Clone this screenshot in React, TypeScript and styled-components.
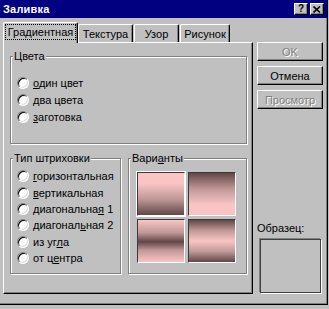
import React from "react";
import styled, { createGlobalStyle } from "styled-components";

const GlobalStyle = createGlobalStyle`
  html, body {
    margin: 0;
    padding: 0;
    background: #c0c0c0;
  }
  body {
    font-family: "Liberation Sans", Arial, sans-serif;
    font-size: 11px;
    color: #000;
  }
`;

const colorOptions = [
  ["", "о", "дин цвет"],
  ["", "д", "ва цвета"],
  ["", "з", "аготовка"],
];

const hatchOptions = [
  ["", "г", "оризонтальная"],
  ["", "в", "ертикальная"],
  ["диагональна", "я", " 1"],
  ["диагонал", "ь", "ная 2"],
  ["из уг", "л", "а"],
  ["от ц", "е", "нтра"],
];

const light = "#fac4c4";
const mid = "#c09898";
const dark = "#624646";

const variants = [
  `linear-gradient(to bottom, ${light} 0%, ${light} 25%, ${mid} 62%, ${dark} 100%)`,
  `linear-gradient(to bottom, ${dark} 0%, ${mid} 38%, ${light} 75%, ${light} 100%)`,
  `linear-gradient(to bottom, ${light} 0%, ${mid} 30%, ${dark} 52%, ${mid} 72%, ${light} 100%)`,
  `linear-gradient(to bottom, ${dark} 0%, ${mid} 25%, ${light} 50%, ${mid} 75%, ${dark} 100%)`,
];

const Label = ({ parts }: { parts: string[] }) => (
  <span>
    {parts[0]}
    <Key>{parts[1]}</Key>
    {parts[2]}
  </span>
);

const App = () => {
  return (
    <>
      <GlobalStyle />
      <Window>
        <TitleBar>
          <Title>Заливка</Title>
          <TitleButtons>
            <TitleButton>?</TitleButton>
            <TitleButton>
              <svg width="8" height="7" viewBox="0 0 8 7">
                <path d="M0.5 0.5 L7 6.5 M7 0.5 L0.5 6.5" stroke="#000" strokeWidth="1.6" />
              </svg>
            </TitleButton>
          </TitleButtons>
        </TitleBar>

        <Body>
          <TabColumn>
            <TabList>
              <Tab $active $w={75}>
                <Focus>Градиентная</Focus>
              </Tab>
              <Tab $w={55}>Текстура</Tab>
              <Tab $w={45}>Узор</Tab>
              <Tab $w={50}>Рисунок</Tab>
            </TabList>

            <Panel>
              <Group $h={94}>
                <Legend>Цвета</Legend>
                <RadioList $top={11} $row={17}>
                  {colorOptions.map((o, i) => (
                    <RadioRow key={i}>
                      <Radio />
                      <Label parts={o} />
                    </RadioRow>
                  ))}
                </RadioList>
              </Group>

              <BottomRow>
                <Group $h={122}>
                  <Legend>Тип штриховки</Legend>
                  <RadioList $top={3} $row={16.4}>
                    {hatchOptions.map((o, i) => (
                      <RadioRow key={i}>
                        <Radio />
                        <Label parts={o} />
                      </RadioRow>
                    ))}
                  </RadioList>
                </Group>

                <Group $h={122}>
                  <Legend>
                    Вари<Key>а</Key>нты
                  </Legend>
                  <Tiles>
                    {variants.map((g, i) => (
                      <Tile key={i} $selected={i === 0} style={{ background: g }} />
                    ))}
                  </Tiles>
                </Group>
              </BottomRow>
            </Panel>
          </TabColumn>

          <Side>
            <Button disabled>OK</Button>
            <Button>Отмена</Button>
            <Button disabled>Просмотр</Button>
            <Spacer />
            <SampleLabel>Образец:</SampleLabel>
            <SampleBox />
          </Side>
        </Body>
      </Window>
    </>
  );
};

export default App;

const Window = styled.div`
  width: 328px;
  height: 305px;
  box-sizing: border-box;
  background: #c0c0c0;
  border-right: 1px solid #000;
  border-bottom: 1px solid #000;
  box-shadow: inset -1px -1px 0 #808080;
  display: flex;
  flex-direction: column;
`;

const TitleBar = styled.div`
  height: 18px;
  background: #000080;
  display: flex;
  align-items: center;
  justify-content: space-between;
  padding: 0 3px 0 3px;
`;

const Title = styled.span`
  color: #fff;
  font-weight: bold;
  font-size: 11px;
  letter-spacing: 0.2px;
`;

const TitleButtons = styled.div`
  display: flex;
  gap: 2px;
`;

const TitleButton = styled.span`
  width: 14px;
  height: 12px;
  box-sizing: border-box;
  background: #c0c0c0;
  border-top: 1px solid #fff;
  border-left: 1px solid #fff;
  border-right: 1px solid #000;
  border-bottom: 1px solid #000;
  box-shadow: inset -1px -1px 0 #808080;
  display: flex;
  align-items: center;
  justify-content: center;
  font-weight: bold;
  font-size: 10px;
  line-height: 10px;
`;

const Body = styled.div`
  flex: 1;
  display: flex;
  padding: 4px 0 0 3px;
`;

const TabColumn = styled.div`
  width: 250px;
  display: flex;
  flex-direction: column;
  padding-bottom: 10px;
`;

const TabList = styled.div`
  height: 20px;
  display: flex;
  align-items: flex-end;
`;

const Tab = styled.div<{ $active?: boolean; $w: number }>`
  width: ${(p) => p.$w}px;
  height: ${(p) => (p.$active ? 21 : 18)}px;
  margin-bottom: ${(p) => (p.$active ? -1 : 0)}px;
  margin-right: ${(p) => (p.$active ? 0 : 1)}px;
  position: relative;
  z-index: ${(p) => (p.$active ? 1 : 0)};
  box-sizing: border-box;
  background: #c0c0c0;
  border-top: 1px solid #fff;
  border-left: 1px solid #fff;
  border-right: 1px solid #000;
  border-radius: 2px 2px 0 0;
  box-shadow: inset -1px 0 0 #808080;
  display: flex;
  align-items: center;
  justify-content: center;
  padding-bottom: ${(p) => (p.$active ? 2 : 0)}px;
`;

const Focus = styled.span`
  outline: 1px dotted #000;
  outline-offset: 1px;
  padding: 0 1px;
  line-height: 12px;
`;

const Panel = styled.div`
  flex: 1;
  box-sizing: border-box;
  border-top: 1px solid #fff;
  border-left: 1px solid #fff;
  border-right: 1px solid #000;
  border-bottom: 1px solid #000;
  box-shadow: inset -1px -1px 0 #808080;
  padding: 7px 5px 0 6px;
  display: flex;
  flex-direction: column;
`;

const Group = styled.fieldset<{ $h: number }>`
  margin: 0;
  padding: 0;
  min-width: 0;
  height: ${(p) => p.$h}px;
  box-sizing: border-box;
  border: 1px solid #808080;
  box-shadow: 1px 1px 0 #fff, inset 1px 1px 0 #fff;
`;

const Legend = styled.legend`
  margin-left: 2px;
  padding: 0 1px;
  line-height: 13px;
  background: #c0c0c0;
`;

const RadioList = styled.div<{ $top: number; $row: number }>`
  padding: ${(p) => p.$top}px 0 0 6px;
  display: grid;
  grid-auto-rows: ${(p) => p.$row}px;
`;

const RadioRow = styled.div`
  display: flex;
  align-items: center;
  gap: 4px;
`;

const Radio = styled.span`
  width: 12px;
  height: 12px;
  box-sizing: border-box;
  border-radius: 50%;
  background: #fff;
  border: 1px solid;
  border-color: #808080 #fff #fff #808080;
  box-shadow: inset 1px 1px 0 #000, inset -1px -1px 0 #dcdcdc;
  flex-shrink: 0;
`;

const Key = styled.span`
  text-decoration: underline;
`;

const BottomRow = styled.div`
  margin-top: 8px;
  display: grid;
  grid-template-columns: 111px 119px;
  column-gap: 7px;
`;

const Tiles = styled.div`
  padding: 7px 0 0 8px;
  display: grid;
  grid-template-columns: 48px 48px;
  grid-template-rows: 44px 44px;
  gap: 3px;
`;

const Tile = styled.div<{ $selected?: boolean }>`
  box-sizing: border-box;
  border: 1px solid;
  border-color: #3a3a3a #fff #fff #3a3a3a;
  outline: ${(p) => (p.$selected ? "1px solid #fff" : "none")};
`;

const Side = styled.div`
  width: 66px;
  margin-left: 4px;
  padding: 20px 0 11px 0;
  display: flex;
  flex-direction: column;
  gap: 5px;
`;

const Button = styled.div<{ disabled?: boolean }>`
  height: 19px;
  box-sizing: border-box;
  background: #c0c0c0;
  border-top: 1px solid #fff;
  border-left: 1px solid #fff;
  border-right: 1px solid #000;
  border-bottom: 1px solid #000;
  box-shadow: inset -1px -1px 0 #808080;
  display: flex;
  align-items: center;
  justify-content: center;
  color: ${(p) => (p.disabled ? "#808080" : "#000")};
  text-shadow: ${(p) => (p.disabled ? "1px 1px 0 #fff" : "none")};
`;

const Spacer = styled.div`
  flex: 1;
`;

const SampleLabel = styled.div`
  line-height: 13px;
  margin-bottom: -1px;
`;

const SampleBox = styled.div`
  width: 61px;
  height: 54px;
  margin-left: 3px;
  box-sizing: border-box;
  border: 1px solid #404040;
  box-shadow: 1px 1px 0 #fff, -1px -1px 0 #808080;
`;
